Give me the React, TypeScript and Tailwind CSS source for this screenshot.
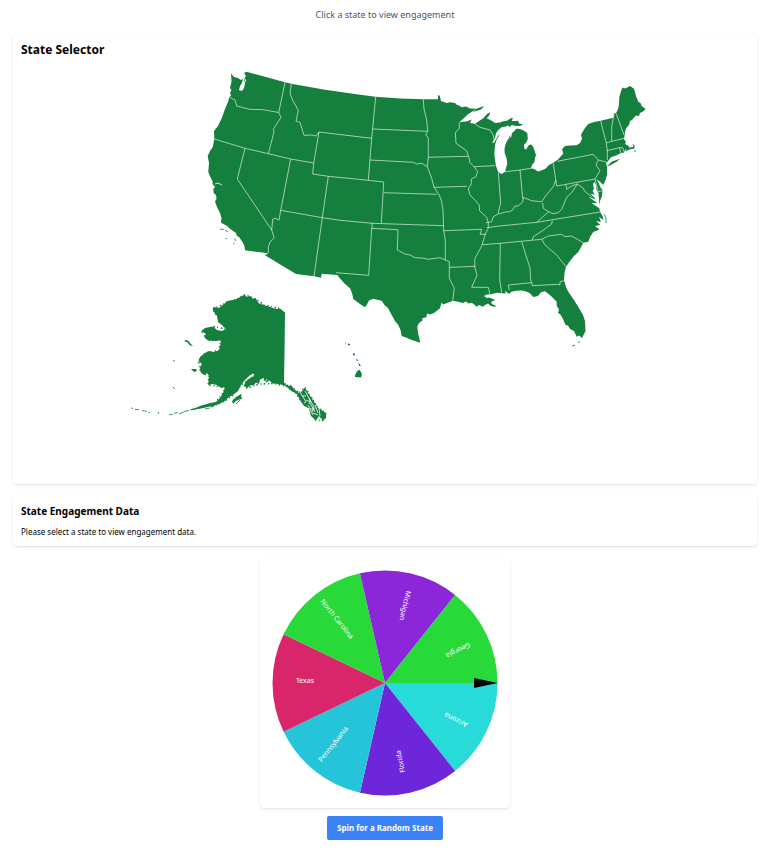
const mainland =
  'M231 73.5L234 77L238 78L241 80L243 79L242 83L240 86L239 90L242 91L244 88L245 84L244 79L246 76L244 73L246.5 71.8L285 82.3L291.3 83.7L325 89.7L360 94.7L375.7 96.8L400 98.4L423.3 99.3L438 99.3L438 95L439.7 95.7L441 101L446.7 103L450 102.3L455 103L457 105L459 105.5L461.7 107.3L466 106.5L470 108.5L476.7 108.7L468 114.3L463 119L459.3 122.3L466 121.5L468 121L471.7 119.5L470 123L475 123.7L479 121L483.3 118.3L487 114L490 112.3L489.5 115L486.7 118.3L491.7 120.7L495 123L500 122.5L503.3 121.3L507 120.8L510.7 118.3L513 118L511.7 121L515 121L518.3 120.7L519 123.5L523 124.5L520 126L516 126L511.7 125L510 127L508 125.5L505 126.7L502 127L498.3 130L496 133.3L495 138L492.3 142.7L494 142.8L499 134.5L499.3 135.5L496.5 140L495 145L494.3 155L496 166L498.3 172.3L501.7 174L505 171.7L507.3 163.3L506.5 158L504.7 153.3L504.5 149L505.3 145L507 141L509.3 138L509.5 135L511 138L512 133L515 130.5L516 128.8L520 129L524 130.7L527.3 133L527.8 139L526.7 141.7L524 145L524.5 149L526 149.5L529 145L531.2 144.5L533.3 147L536 155L535 158L534.5 162L532 165L531 168.3L534 169L538.3 171.5L545 169L549 165L553.3 162.8L558 159.5L563.3 153.5L562 149.3L565 146L570 145.6L576.7 145.2L580 143L582 139L581 134.5L585 128L588.3 124L594 122L600.7 120.7L613.3 117.7L614 113.3L616 113.3L618.3 108.3L619 104L619.3 97L621.7 89L623 87.5L625 88.5L630 86L634 88.8L636 96L638.3 101.7L640.5 103L641.7 106L645.6 109L643 111.5L640 113L639 116L636 115.5L633.3 118.3L632 120L630 121L629 125L626 128.3L625 132L624.5 136.7L623.7 139L626 141.7L625 144L628 145.5L629.3 147.5L633.3 147L632.5 144L634.5 145.5L634.5 148.6L629.3 149.5L626 151.2L625.5 149L624 152.5L620 153.5L616.7 155.3L611 157.3L608.3 160.7L606 163L607 166.5L607 175L605.5 180L603.3 185L600 181.7L596.7 179.3L599 184L600.5 187.5L602.5 190L602 196L600 201L599.3 205.5L599 200L598.5 193L596.5 190L596 185L594.5 182L593 184L594 189L592.5 191L595 195L590.5 193.5L596 199.5L588.5 197L597.5 203L591.5 203L599.3 208.3L600 211.7L602.5 216L603.5 220L599 217L601 222L596 221L600.5 225L595 226L599.5 229.5L593.3 232L590 237L588.3 241.7L583.3 242.7L580 249L578.3 252L574 256L570 261L566 266.7L564.5 273L564 280L566 287L568.3 291.7L574 300L578.3 307L583 315L585 321L585.5 331L582 338L579 335.5L576.7 336.7L574 331L570 329L568 325.5L565.5 325L563 319L560 314L558 313.3L559 309.5L556.8 306L556.7 301.7L551 296L545 291.3L541 292.3L538 296L533.3 297L529.5 293L526 291.5L521.7 290.5L516 290.7L510.7 292L509.7 294L507 292.5L505.5 290.5L505.5 293.5L501.7 293.3L497 292.7L490 294.5L487 294.5L484 296L487 298L489 297.5L493 299L495 300L491 302L492 304L496 306L495 307L490 305.5L488 303.5L485 305L482.7 306.7L479 305L476.7 306.7L473.5 304L471.7 302.7L468.5 303.5L466 301.5L463 303L457 301.5L452.7 301L447 303L443 304.5L441.5 302.5L440 308.3L434 313L430 314.5L427 313.5L426.5 317L422 318.5L422.5 320.5L419 323L417.3 326.5L418 333L420.3 342.7L411.7 340L406 337.5L401.7 336L400.5 330L398.3 325L395 321L391.7 315L388 308L384.5 305L381.7 300.7L377 299.8L373.3 298.7L369 300.5L367 304.5L365 307.2L360 304L353.3 299L352 293L350 288.3L344 283L340 278.5L337.3 275L321.7 273.7L321 277.7L314 276.3L296 274L265 255.3L268.3 253.3L245 250.3L244.5 246L242.5 242L239 237L236.7 235.5L236 233L231 229.5L226.7 225.7L221 222.7L221.5 218L220 213L217 207L215 201.5L216.5 199L216 195L213.7 193L213.3 189L215 187L212.5 184L212.7 181.7L209 174L208.3 171.7L209 163L207.7 156L210 151L212.7 147L214.3 139L214 131L218 126L221.7 118.3L225 109L228 102L229.3 97L231 95.5L230 93L231.5 90L230 88L231.5 82Z';

const alaska =
  'M244.5 294.7L247 297L250 296L253 298.5L256 299L259 303.5L264 305L270 307L276 309L280 308.5L285 312.5L284.6 348L284 383.5L289 386L291 385L294 389L299 393L303 390.5L305 387.5L308 393L313 400L318 408L326 413L326 418L323 420.5L319 416L316 420.5L311 416L309 408L304 406L300 400L297 394L290 390L286 386L279 384L273 383.5L269 380.5L266 383L263 378.5L260 379.5L259 384L256 382.5L254 385L250 385.5L247 388L244 386L246 381L251 377.5L255 375.5L253 373.5L249 376L245 380L241 385L238 391L233 395L229 397L225 401L218 404.5L213 406L208 407L211 404L216 402L220 398L223 393L225 387L221 388L217 385L212 384L208 385L209 376L207 373L204 375L200.5 372L200 367L202 364L198.5 361L200 357L205 353L209 351L213 352L219 350.5L220.5 344L221 340L216 341L208 340.5L204 337L206 334L201.5 331L205 328L213 326.5L217 330L222 331L226 329L222 325L218 322L217 316L214 312L212.5 309L214 307L219 308L224 304L227 301L233 300L237 299L240 297Z';

const alaskaShore =
  'M284 383.5L289 386L294 389L299 393L305 387.5L313 400L318 408L326 413L323 420.5L316 420.5L309 408L300 400L297 394L286 386L273 383.5L259 384L247 388L244 386L255 375.5L241 385L233 395L225 401L213 406L223 393L225 387L208 385L209 376L200.5 372L198.5 361L205 353L219 350.5L221 340L208 340.5L201.5 331L213 326.5L226 329L217 316L212.5 309L224 304L237 299L244.5 294.7L256 299L264 305L280 308.5';

const islands = [
  'M185 340L188 340.5L190 343L193 346L190 345.5L187 342L184.5 341.5Z',
  'M191 369L196 369L197 371L194 372Z',
  'M607 166L612 161.5L620 158.7L617 161.5L610 165.5Z',
  'M477 108.5L484 106L481 109.5L473 112Z',
  'M232 401L236 397L242 393.5L241 396L242 399L237 400L233 404Z',
  'M216 402L208 407L201 408.5L190 410.5L200 406L210 403Z',
  'M189 409.5L198 407.5L193 410Z',
  'M355 375.5L356.5 372L359.5 369.5L362 374L361 377.5L355 377Z',
  'M348 343.5L350.3 344L349.5 345.5L347.8 345Z',
  'M353 353L355 354L354.5 356L353 354.8Z',
  'M356 358.5L358.5 360.5L357 361Z',
  'M358.5 362.5L361 366L359 366Z',
  'M234 238L236.5 240.5L235 240.5Z',
  'M233 242L235 245L233.5 244Z',
];

const islandChain =
  'M131 407.5L133 409M135 409.5L139 409.5M142 411L144 410.5L147 412M148.500 412.500L150 413M158 412L159 414M169 415L173 414M174 413L176 413L178 412.5M179 414L184 412M184 411.500L189 410.5M173 360L175 361.5M173 387L175 389M205 409L210 408M220 229L224 229.5M225 230.5L228 231.5M225.5 238.5L227 238.5M572 346L575 345M578 343L580 341.5M634 151L636 151M604 214L606 218L606 223M345 343L346 343M233 400L238 400M236 404L240 400';

const borders =
  'M285 82.3L278.7 112.5M229.3 97L235 100L236.7 106L241.7 107.3L250 109.3L263.3 109.7L278.7 112.5L281 117.3L273.3 129.3L274 132L268.3 153.7M214.3 139L245 148.3L268.3 153.7L290.7 159L313.7 163M291.3 83.7L290 93.3L293 101L296 106L298.3 110.7L296 121L300 122.3L304 135.3L311.7 135L316 136L319 132L371.7 138.3M319 132L313.7 163L312.7 174L328.3 176.3L368.3 180.3L383.7 182M375.7 97L371.7 138.3L368.3 180.3M372.7 129L427.7 131.3M370 160L413.3 162.3L416.7 164L421.7 163.3L427.3 166.7M423.3 99.3L424 109L426.7 120L427.7 131.3L425.7 134.3L428.3 138.3L428.3 157.3L427.3 166.7L431.7 178.3L434 187.3L439.3 195L441.7 201.7L443 210L443.7 230.7L445.3 240L445.3 260M428.3 157.3L468 156.3M383.7 192.7L436.7 194.3M383.7 182L381.3 223.3M434 187.3L466.7 186.3M280.7 210.3L322.3 217.7L340 220.3L372.3 223.3L443.7 225.7M328.3 176.3L322.3 217.7L314 276.3M290.7 159L280.7 210.3L279 220L275 218.3L272.7 219.3L271.7 230M245 148.3L237.3 179L271.7 230L274.3 238L270 242L268.3 247.3L268.3 253M372.3 223.3L371.7 228.3L368.7 275.3L336 272.7M371.7 228.3L398 229.7L397.3 250L405 254L410 255L415 257.7L422 258L428.3 259.3L434 258.5L440 257.7L449.3 261.7L449.3 278.3L454.3 288.3L452.7 301M449.3 267.3L475.3 266.3M443.7 230.7L481.7 229.3L480 234.3L485.7 234.3M459.3 122.3L459.3 128.3L455.3 132.7L456 143.3L466.7 151L468.7 156.7L470 162.7L474 166.7L477.7 171.7L476 176.7L471.3 179L471.3 184L468.3 188.3L470 195L475 200L479.3 205L479.5 210.7L486.7 217.3L488.3 222.7L488.3 228.3L485.7 233.3L481.7 246L475 258.3L474.7 266.7L477 275L471.7 287.3L488.3 287.3L490 295M474 166.7L495.3 165.7M475 124L480 127.3L490 130L493.3 135L494 140M498.3 172.7L500.7 203L498 213.3M486 222.7L491.7 221.7L493.3 216.7L498 214L502 213L506.7 211.7L509 212L512.7 210L515 206L518 206L522.7 202L523.3 197.5L531.7 200.7L541.7 201.7L545 196.7L553.3 186.7L555.7 180M505 171.7L520 170L531 168.3M520 170L522.7 198.3M553.3 163.3L556.7 186L595 179M557.3 161.3L593.3 154.3L598.3 160L606 162M598.3 160L596 165L600 170.7L595 179M542.7 202.7L543.3 208.3L548.7 211.7L553 213.7L558.3 212.7L561.7 209.3L566.7 197.3L571.7 192.7L577.3 184M566 184.5L566.7 189.3L571.7 186L577.3 184L583 188L585 191.7L591.7 196.7M595 179L598.3 191.7L602.3 190.7M486.7 227.7L499.3 226L536.7 222.3L600 212M536.7 222.3L548.7 211.7M552.3 220.7L551.7 224L542 231L533.3 236.7L532.3 240M482.7 244.7L500.3 243.3L541.7 239.3L548.3 236L561.7 234.3L565 236.7L571.7 236L583.3 242.7M541.7 239.3L545 245L556.7 255L566 266.7M500.3 243.3L499.7 280L501.7 292.7M521.7 241.7L530 268.3L530.7 280L532.7 285.7L558.3 284.3L560 285L560 281.7L564 280.7M509.3 290L508.3 285L531.7 282.7M600.7 120.7L603.3 131.7L606 141.7L607.3 150L607.3 160M614 114.3L611.7 126.7L611.7 141M606.7 142.7L624 138.3M616 113.3L624 135M606.7 150.7L619.3 147.7L622.7 147.7L624 151.7M619.3 147.7L621 153';

const inlets =
  'M300 392L306 402L304 403M305 391L310 400L309 404M309 398L314 407L312 412M315 405L318 413M308 405L313 415M310 403L315 412M302 396L306 396M306 400L311 402M310 409L315 409M313 413L318 415M319 409L320 416M264 378L260 381L262 383M267 379L265 383M215 184L218 183L222 185M244 74L243 78L246 80L244 84L242 85';

const slices = [
  { name: 'Arizona', color: '#28dbd9' },
  { name: 'Florida', color: '#6d26d9' },
  { name: 'Pennsylvania', color: '#26c4d9' },
  { name: 'Texas', color: '#d9266a' },
  { name: 'North Carolina', color: '#28d939' },
  { name: 'Michigan', color: '#8c26d9' },
  { name: 'Georgia', color: '#28d93a' },
];

function StateMap() {
  return (
    <svg
      viewBox="21 60 728 416"
      className="block w-full"
      role="img"
      aria-label="Map of the United States"
    >
      <g fill="#15803d">
        <path d={mainland} />
        <path d={alaska} />
        {islands.map((d) => (
          <path key={d} d={d} />
        ))}
      </g>
      <path d={alaskaShore} fill="none" stroke="#15803d" strokeWidth="1.6" strokeDasharray="1.5 2 1 3" />
      <path d={islandChain} fill="none" stroke="#15803d" strokeWidth="1" opacity="0.8" />
      <g fill="none" stroke="#ffffff" strokeLinejoin="round">
        <path d={borders} strokeWidth="0.6" />
        <path d={inlets} strokeWidth="0.8" />
      </g>
    </svg>
  );
}

function Wheel() {
  const step = (Math.PI * 2) / slices.length;
  const radius = 112.5;
  return (
    <svg viewBox="0 0 250 250" className="block w-full" role="img" aria-label="State wheel">
      {slices.map((slice, i) => {
        const a = i * step;
        const b = a + step;
        const mid = a + step / 2;
        const x = 125 + 80 * Math.cos(mid);
        const y = 125 + 80 * Math.sin(mid);
        return (
          <g key={slice.name}>
            <path
              fill={slice.color}
              d={`M125 125L${125 + radius * Math.cos(a)} ${125 + radius * Math.sin(a)}A${radius} ${radius} 0 0 1 ${125 + radius * Math.cos(b)} ${125 + radius * Math.sin(b)}Z`}
            />
            <text
              fill="#ffffff"
              textAnchor="middle"
              className="text-[7px]"
              transform={`translate(${x} ${y}) rotate(${(mid * 180) / Math.PI + 180})`}
            >
              {slice.name}
            </text>
          </g>
        );
      })}
      <path d="M214 120L237.500 125L214 130Z" fill="#000000" />
    </svg>
  );
}

export default function App() {
  return (
    <main className="flex flex-col items-center py-2 pr-3 pl-[13px] font-['Noto_Sans',sans-serif] text-black">
      <p className="mb-3 text-[9px] leading-[14px] text-gray-600">Click a state to view engagement</p>
      <section className="w-full rounded bg-white p-2 shadow">
        <h1 className="mb-0.5 text-[12px] leading-4 font-bold">State Selector</h1>
        <StateMap />
      </section>
      <section className="mt-3 w-full rounded bg-white p-2 shadow">
        <h2 className="mb-2 text-[10px] leading-[14px] font-bold">State Engagement Data</h2>
        <p className="text-[8px] leading-3">Please select a state to view engagement data.</p>
      </section>
      <section className="mt-3 w-[250px] rounded bg-white shadow">
        <Wheel />
      </section>
      <button
        type="button"
        className="mt-2 h-6 rounded-xs bg-[#3b82f6] px-[10px] text-[8px] leading-3 font-bold text-white"
      >
        Spin for a Random State
      </button>
    </main>
  );
}
